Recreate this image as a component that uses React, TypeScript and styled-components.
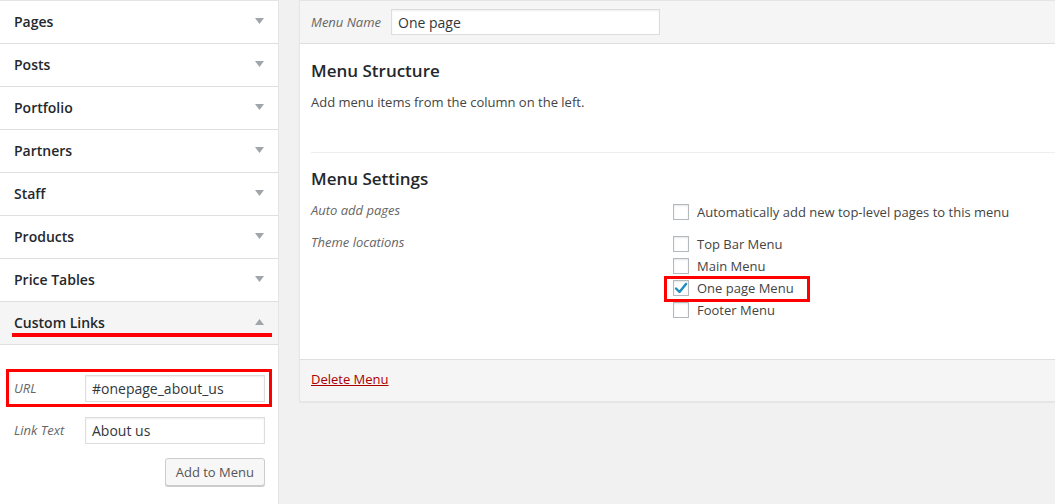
import styled, { createGlobalStyle } from 'styled-components';

const GlobalStyle = createGlobalStyle`
  html, body {
    margin: 0;
    padding: 0;
    background: #f1f1f1;
    font-family: 'Open Sans', 'Liberation Sans', sans-serif;
    color: #444;
    overflow: hidden;
  }
`;

const sections = ['Pages', 'Posts', 'Portfolio', 'Partners', 'Staff', 'Products', 'Price Tables'];

const locations = [
  { label: 'Top Bar Menu', checked: false },
  { label: 'Main Menu', checked: false },
  { label: 'One page Menu', checked: true },
  { label: 'Footer Menu', checked: false },
];

function Arrow({ up }: { up?: boolean }) {
  return (
    <svg width="9" height="6" viewBox="0 0 9 6">
      <path d={up ? 'M0 6 L4.5 0 L9 6 Z' : 'M0 0 L9 0 L4.5 6 Z'} fill="#a0a5aa" />
    </svg>
  );
}

function Check() {
  return (
    <svg width="14" height="14" viewBox="0 0 14 14">
      <path d="M2 7.5 L5.5 11 L12 3" stroke="#1e8cbe" strokeWidth="2.4" fill="none" strokeLinecap="round" strokeLinejoin="round" />
    </svg>
  );
}

export default function App(): JSX.Element {
  return (
    <Page>
      <GlobalStyle />
      <Sidebar>
        {sections.map((s) => (
          <Section key={s}>
            <SectionTitle>{s}</SectionTitle>
            <Arrow />
          </Section>
        ))}
        <Section $open>
          <SectionTitle>Custom Links</SectionTitle>
          <Arrow up />
          <Underline />
        </Section>
        <SectionBody>
          <FieldRow $highlight>
            <FieldLabel>URL</FieldLabel>
            <TextInput>#onepage_about_us</TextInput>
          </FieldRow>
          <FieldRow>
            <FieldLabel>Link Text</FieldLabel>
            <TextInput>About us</TextInput>
          </FieldRow>
          <ButtonRow>
            <Button>Add to Menu</Button>
          </ButtonRow>
        </SectionBody>
      </Sidebar>
      <Panel>
        <PanelHeader>
          <HeaderLabel>Menu Name</HeaderLabel>
          <NameInput>One page</NameInput>
        </PanelHeader>
        <PanelBody>
          <Heading>Menu Structure</Heading>
          <Hint>Add menu items from the column on the left.</Hint>
          <Divider />
          <Heading>Menu Settings</Heading>
          <SettingRow>
            <SettingLabel>Auto add pages</SettingLabel>
            <Options>
              <Option>
                <Box />
                Automatically add new top-level pages to this menu
              </Option>
            </Options>
          </SettingRow>
          <SettingRow>
            <SettingLabel>Theme locations</SettingLabel>
            <Options>
              {locations.map((l) => (
                <Option key={l.label} $highlight={l.checked}>
                  <Box>{l.checked && <Check />}</Box>
                  {l.label}
                </Option>
              ))}
            </Options>
          </SettingRow>
        </PanelBody>
        <PanelFooter>
          <DeleteLink href="#">Delete Menu</DeleteLink>
        </PanelFooter>
      </Panel>
    </Page>
  );
}

const Page = styled.div`
  display: flex;
  align-items: flex-start;
  height: 504px;
  gap: 20px;
`;

const Sidebar = styled.div`
  width: 279px;
  flex-shrink: 0;
  height: 504px;
  background: #fff;
  border-top: 1px solid #e5e5e5;
  border-right: 1px solid #e5e5e5;
  box-sizing: border-box;
`;

const Section = styled.div<{ $open?: boolean }>`
  position: relative;
  height: 40px;
  border-bottom: 1px solid #dfdfdf;
  display: flex;
  align-items: center;
  justify-content: space-between;
  padding: 0 14px 2px 14px;
  background: ${({ $open }) => ($open ? '#f5f5f5' : '#fff')};
`;

const SectionTitle = styled.span`
  font-size: 14px;
  font-weight: 600;
  color: #23282d;
`;

const Underline = styled.div`
  position: absolute;
  left: 12px;
  right: 6px;
  bottom: 7px;
  height: 4px;
  background: #ff0000;
`;

const SectionBody = styled.div`
  padding: 24px 6px 0 6px;
`;

const FieldRow = styled.div<{ $highlight?: boolean }>`
  display: flex;
  align-items: center;
  height: 32px;
  padding: 0 4px 0 5px;
  margin-bottom: 4px;
  border: 3px solid ${({ $highlight }) => ($highlight ? '#ff0000' : 'transparent')};
`;

const FieldLabel = styled.span`
  width: 71px;
  font-size: 13px;
  font-style: italic;
  color: #666;
`;

const TextInput = styled.div`
  flex: 1;
  height: 27px;
  box-sizing: border-box;
  border: 1px solid #ddd;
  box-shadow: inset 0 1px 2px rgba(0, 0, 0, 0.07);
  background: #fff;
  padding: 0 6px;
  display: flex;
  align-items: center;
  font-size: 14px;
  color: #32373c;
`;

const ButtonRow = styled.div`
  display: flex;
  justify-content: flex-end;
  padding: 5px 7px 0 0;
`;

const Button = styled.button`
  height: 28px;
  padding: 0 10px;
  border: 1px solid #ccc;
  border-radius: 3px;
  background: #f7f7f7;
  box-shadow: 0 1px 0 #ccc;
  font-family: 'Open Sans', 'Liberation Sans', sans-serif;
  font-size: 13px;
  color: #555;
`;

const Panel = styled.div`
  flex: 1;
  background: #fff;
  border: 1px solid #e5e5e5;
  border-right: none;
  box-shadow: 0 1px 1px rgba(0, 0, 0, 0.04);
`;

const PanelHeader = styled.div`
  height: 42px;
  background: #f5f5f5;
  border-bottom: 1px solid #dfdfdf;
  display: flex;
  align-items: center;
  padding-left: 11px;
`;

const HeaderLabel = styled.span`
  width: 80px;
  font-size: 13px;
  font-style: italic;
  color: #666;
`;

const NameInput = styled.div`
  width: 269px;
  height: 26px;
  box-sizing: border-box;
  border: 1px solid #ddd;
  box-shadow: inset 0 1px 2px rgba(0, 0, 0, 0.07);
  background: #fff;
  display: flex;
  align-items: center;
  padding: 0 6px;
  font-size: 14px;
  color: #32373c;
`;

const PanelBody = styled.div`
  padding: 15px 0 38px 11px;
`;

const Heading = styled.h3`
  margin: 0;
  font-size: 17px;
  font-weight: 600;
  line-height: 24px;
  color: #23282d;
`;

const Hint = styled.p`
  margin: 10px 0 0;
  font-size: 13px;
  line-height: 18px;
  color: #444;
`;

const Divider = styled.div`
  height: 1px;
  background: #eee;
  margin: 41px 0 14px;
`;

const SettingRow = styled.div`
  display: flex;
  align-items: flex-start;
  margin-top: 10px;
`;

const SettingLabel = styled.span`
  width: 362px;
  flex-shrink: 0;
  font-size: 13px;
  line-height: 18px;
  font-style: italic;
  color: #666;
`;

const Options = styled.div`
  display: flex;
  flex-direction: column;
`;

const Option = styled.div<{ $highlight?: boolean }>`
  position: relative;
  display: flex;
  align-items: center;
  gap: 8px;
  height: 22px;
  font-size: 13px;
  color: #444;
  &::after {
    content: '';
    display: ${({ $highlight }) => ($highlight ? 'block' : 'none')};
    position: absolute;
    left: -9px;
    top: -1px;
    width: 140px;
    height: 20px;
    border: 3px solid #ff0000;
  }
`;

const Box = styled.span`
  width: 16px;
  height: 16px;
  box-sizing: border-box;
  border: 1px solid #b4b9be;
  background: #fff;
  box-shadow: inset 0 1px 2px rgba(0, 0, 0, 0.1);
  display: flex;
  align-items: center;
  justify-content: center;
`;

const PanelFooter = styled.div`
  height: 42px;
  background: #f5f5f5;
  border-top: 1px solid #dfdfdf;
  display: flex;
  align-items: center;
  padding: 0 0 4px 11px;
  box-sizing: border-box;
`;

const DeleteLink = styled.a`
  font-size: 13px;
  color: #a00;
  text-decoration: underline;
`;
